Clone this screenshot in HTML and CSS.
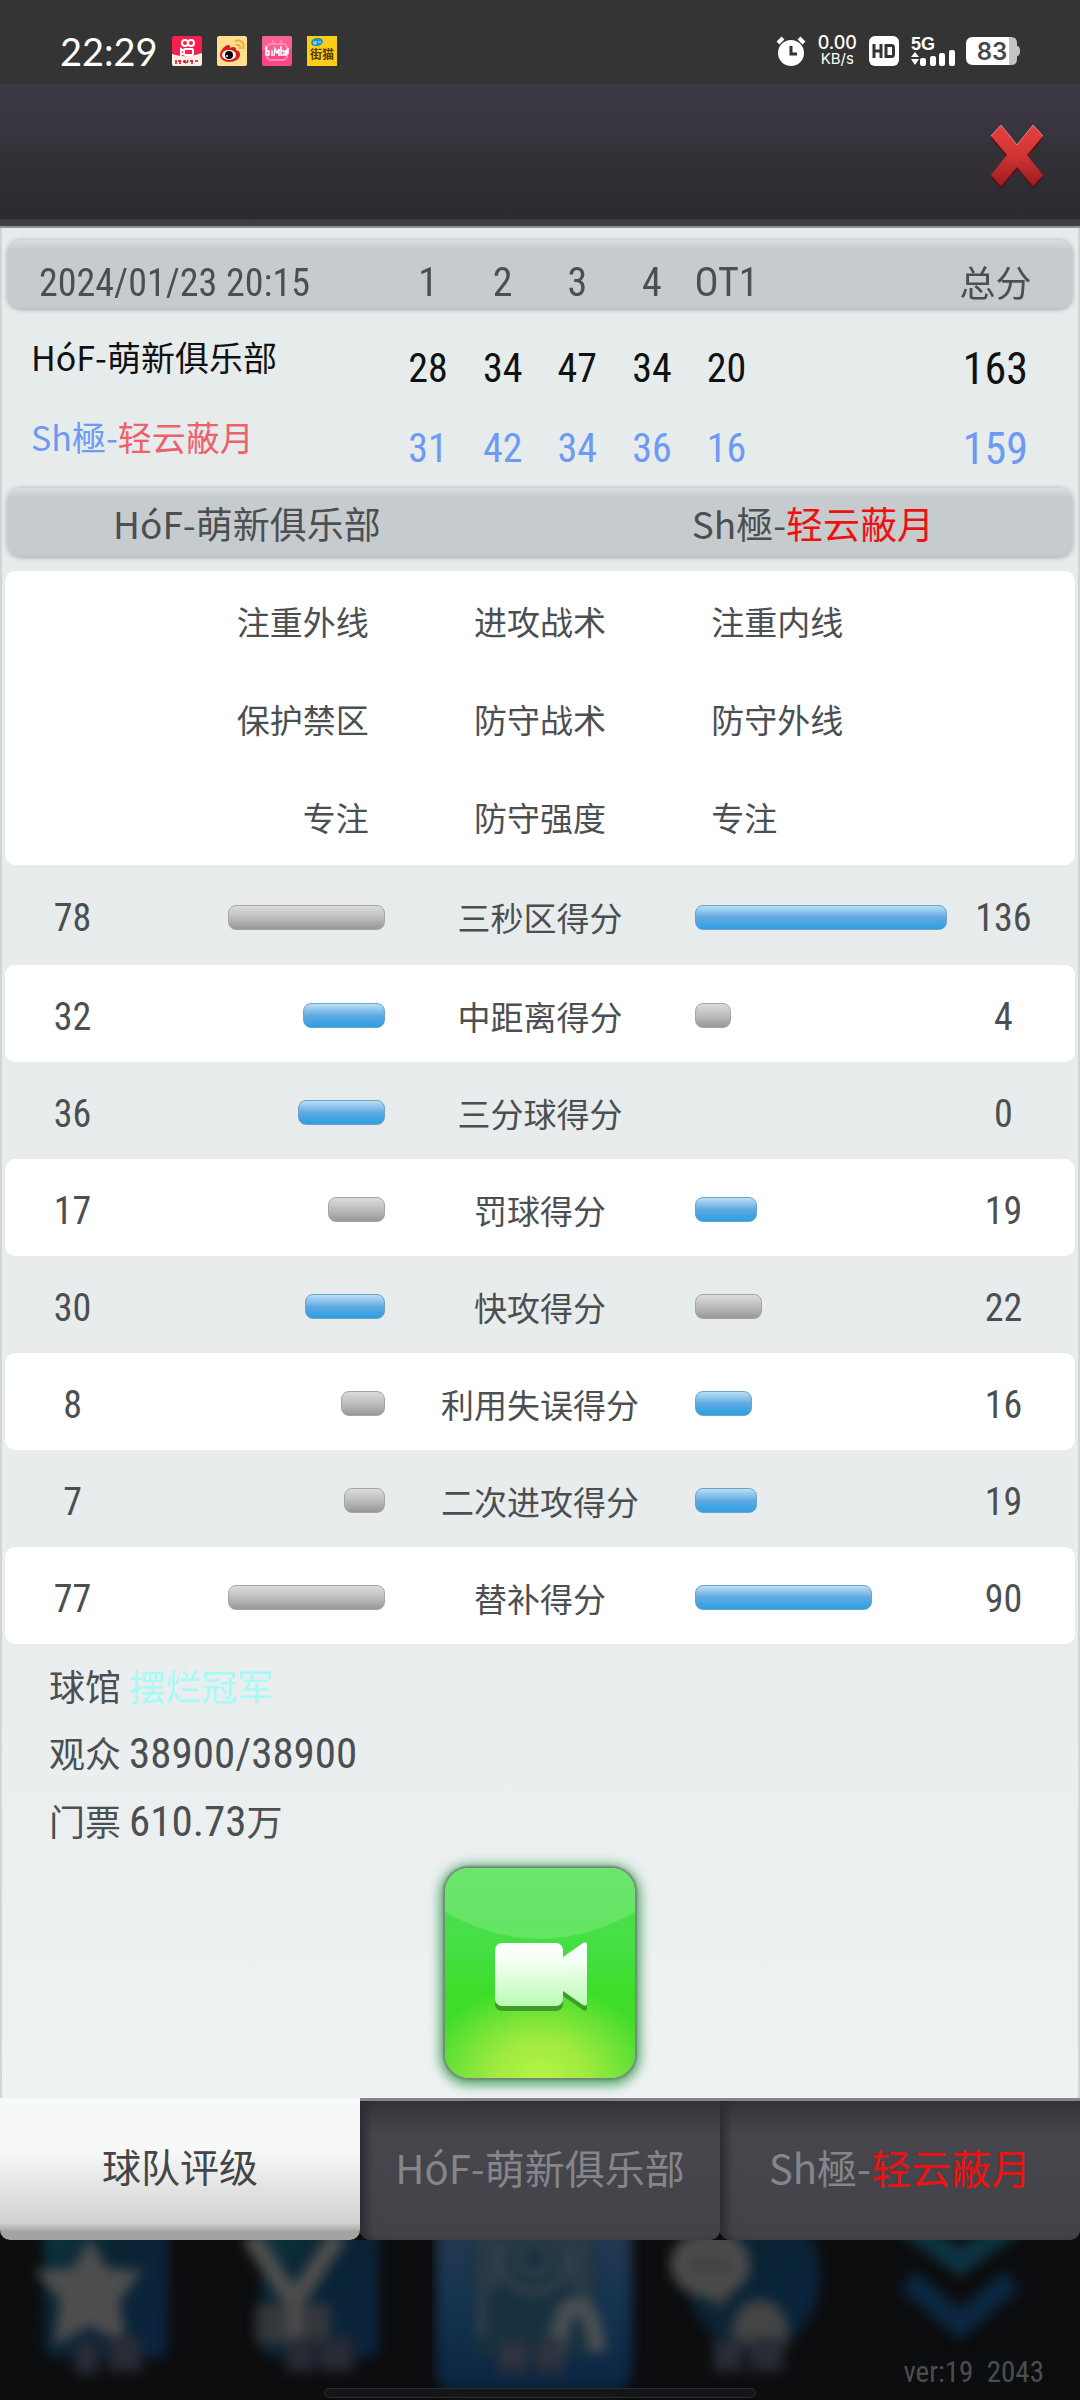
FILE: index.html
```html
<!DOCTYPE html>
<html lang="zh-CN">
<head>
    <meta charset="UTF-8">
    <meta name="viewport" content="width=device-width, initial-scale=1.0">
    <title>比赛数据</title>
    <link rel="stylesheet" href="styles.css">
</head>
<body>
    <div class="status-bar">
        <span class="clock">22:29</span>
        <svg class="app-icon" viewBox="0 0 30 30">
            <rect width="30" height="30" rx="2" fill="#fb1d4e"/>
            <path d="M0 18Q15 23 30 17V28a2 2 0 0 1-2 2H2a2 2 0 0 1-2-2z" fill="#fdeee2"/>
            <g fill="none" stroke="#fff" stroke-width="2">
                <circle cx="13" cy="7" r="3"/>
                <circle cx="19" cy="7" r="3"/>
                <rect x="12" y="13" width="9" height="6" rx="1"/>
                <path d="M12 15l-3-2v6l3-2"/>
            </g>
            <path d="M4 24v4M6 25h3M8 24v4M11 25l3 2M13 24v3M16 24l-1 3M18 25h3M20 24v4M23 25h3" stroke="#d3153b" stroke-width="1.6"/>
        </svg>
        <svg class="app-icon" viewBox="0 0 30 30">
            <rect width="30" height="30" rx="2" fill="#fddf8d"/>
            <path d="M3 19C3 14 9 8 12 9c2 1 1 3 1 3 3-2 7-1 6 2 4 1 4 3 4 5 0 4-5 7-11 7-5 0-9-3-9-7z" fill="#dc1f1c"/>
            <ellipse cx="12" cy="19" rx="7" ry="5" fill="#fff"/>
            <circle cx="12" cy="19" r="4" fill="#000"/>
            <circle cx="10" cy="20" r="1" fill="#fff"/>
            <path d="M18 5c6-2 10 2 8 8M19 9c3-1 5 1 4 4" fill="none" stroke="#f0a93c" stroke-width="2"/>
        </svg>
        <svg class="app-icon" viewBox="0 0 30 30">
            <rect width="30" height="30" rx="2" fill="#fb4584"/>
            <rect width="30" height="14" rx="2" fill="#fc5f96"/>
            <rect x="5" y="8" width="20" height="16" rx="4" fill="none" stroke="#fd8db4" stroke-width="2"/>
            <path d="M10 4l2 3M20 4l-2 3" stroke="#fd8db4" stroke-width="2"/>
            <path d="M4 10v9h3v-4H4M10 14v6M12 20l1-7 2 4 2-4 0 7M19 10v9h3v-4h-3M24 20v-6l2 4v-6" fill="none" stroke="#fff" stroke-width="1.6"/>
        </svg>
        <svg class="app-icon" viewBox="0 0 30 30">
            <rect width="30" height="30" fill="#f9ce16"/>
            <ellipse cx="10" cy="6" rx="6" ry="4" transform="rotate(-12 10 6)" fill="#1593cf"/>
            <path d="M7 5v3h2v-3M11 6h3" fill="none" stroke="#d8f0fb" stroke-width="1"/>
            <text x="15" y="23" text-anchor="middle" class="app-icon-text">街猫</text>
        </svg>
        <span class="spacer"></span>
        <svg class="alarm-icon" viewBox="0 0 30 30">
            <circle cx="15" cy="17" r="13" fill="#fff"/>
            <path d="M2 7l5-5M28 7l-5-5" stroke="#fff" stroke-width="4"/>
            <path d="M15 10v8h6" fill="none" stroke="#343434" stroke-width="3"/>
        </svg>
        <span class="net-speed"><b>0.00</b><small>KB/s</small></span>
        <svg class="hd-icon" viewBox="0 0 30 30">
            <rect width="30" height="30" rx="6" fill="#fff"/>
            <path d="M5 8v14M12 8v14M5 15h7M17 9.500h5.500a2 2 0 0 1 2 2v7a2 2 0 0 1-2 2H17z" fill="none" stroke="#343434" stroke-width="3"/>
        </svg>
        <svg class="signal-icon" viewBox="0 0 44 34">
            <text x="0" y="18" class="signal-text">5G</text>
            <path d="M0 25l4-5 4 5zM0 27l4 6 4-6z" fill="#fff"/>
            <g fill="#fff">
                <rect x="9" y="26" width="6" height="8" rx="2"/>
                <rect x="19" y="24" width="6" height="10" rx="2"/>
                <rect x="28" y="21" width="6" height="13" rx="2"/>
                <rect x="38" y="18" width="6" height="16" rx="2"/>
            </g>
        </svg>
        <svg class="battery-icon" viewBox="0 0 54 28">
            <path d="M43 0h2q6 0 6 6v3q3 0 3 5t-3 5v3q0 6-6 6h-2z" fill="#c4c4c4"/>
            <path d="M7 0h36v28H7q-7 0-7-7V7q0-7 7-7z" fill="#fff"/>
            <text x="26" y="23" text-anchor="middle" class="battery-text">83</text>
        </svg>
    </div>

    <header class="top-bar">
        <button class="close-btn" aria-label="关闭">
            <svg viewBox="0 0 56 66">
                <defs>
                    <linearGradient id="red" x1="0" y1="0" x2="0" y2="1">
                        <stop offset="0" stop-color="#e8403f"/>
                        <stop offset="0.500" stop-color="#cf3433"/>
                        <stop offset="1" stop-color="#9e1c1f"/>
                    </linearGradient>
                </defs>
                <path d="M12 4L28 24 44 4 54 15 38 34 54 54 44 65 28 46 12 65 2 54 18 34 2 15z" fill="#541519"/>
                <path d="M12 1L28 21 44 1 54 12 38 31 54 51 44 62 28 43 12 62 2 51 18 31 2 12z" fill="url(#red)"/>
                <path d="M2 12L12 1 28 21 44 1 54 12" fill="none" stroke="#d98686" stroke-width="1"/>
            </svg>
        </button>
    </header>

    <main class="panel">
        <table class="score">
            <thead>
                <tr>
                    <th class="score-name num">2024/01/23 20:15</th>
                    <th class="num">1</th>
                    <th class="num">2</th>
                    <th class="num">3</th>
                    <th class="num">4</th>
                    <th class="num">OT1</th>
                    <th class="score-total">总分</th>
                </tr>
            </thead>
            <tbody>
                <tr class="home">
                    <td class="score-name">HóF-萌新俱乐部</td>
                    <td class="num">28</td>
                    <td class="num">34</td>
                    <td class="num">47</td>
                    <td class="num">34</td>
                    <td class="num">20</td>
                    <td class="score-total num">163</td>
                </tr>
                <tr class="away">
                    <td class="score-name">Sh極-<span>轻云蔽月</span></td>
                    <td class="num">31</td>
                    <td class="num">42</td>
                    <td class="num">34</td>
                    <td class="num">36</td>
                    <td class="num">16</td>
                    <td class="score-total num">159</td>
                </tr>
            </tbody>
        </table>

        <div class="versus">
            <span>HóF-萌新俱乐部</span>
            <span>Sh極-<em>轻云蔽月</em></span>
        </div>

        <table class="tactics">
            <tr><td>注重外线</td><th>进攻战术</th><td>注重内线</td></tr>
            <tr><td>保护禁区</td><th>防守战术</th><td>防守外线</td></tr>
            <tr><td>专注</td><th>防守强度</th><td>专注</td></tr>
        </table>

        <table class="stats">
            <tr>
                <td class="num">78</td>
                <td><div class="bar" style="width: 61%"></div></td>
                <th>三秒区得分</th>
                <td><div class="bar win" style="width: 98%"></div></td>
                <td class="num">136</td>
            </tr>
            <tr>
                <td class="num">32</td>
                <td><div class="bar win" style="width: 32%"></div></td>
                <th>中距离得分</th>
                <td><div class="bar" style="width: 14%"></div></td>
                <td class="num">4</td>
            </tr>
            <tr>
                <td class="num">36</td>
                <td><div class="bar win" style="width: 34%"></div></td>
                <th>三分球得分</th>
                <td></td>
                <td class="num">0</td>
            </tr>
            <tr>
                <td class="num">17</td>
                <td><div class="bar" style="width: 22%"></div></td>
                <th>罚球得分</th>
                <td><div class="bar win" style="width: 24%"></div></td>
                <td class="num">19</td>
            </tr>
            <tr>
                <td class="num">30</td>
                <td><div class="bar win" style="width: 31%"></div></td>
                <th>快攻得分</th>
                <td><div class="bar" style="width: 26%"></div></td>
                <td class="num">22</td>
            </tr>
            <tr>
                <td class="num">8</td>
                <td><div class="bar" style="width: 17%"></div></td>
                <th>利用失误得分</th>
                <td><div class="bar win" style="width: 22%"></div></td>
                <td class="num">16</td>
            </tr>
            <tr>
                <td class="num">7</td>
                <td><div class="bar" style="width: 16%"></div></td>
                <th>二次进攻得分</th>
                <td><div class="bar win" style="width: 24%"></div></td>
                <td class="num">19</td>
            </tr>
            <tr>
                <td class="num">77</td>
                <td><div class="bar" style="width: 61%"></div></td>
                <th>替补得分</th>
                <td><div class="bar win" style="width: 69%"></div></td>
                <td class="num">90</td>
            </tr>
        </table>

        <div class="info">
            <p>球馆 <span class="arena">摆烂冠军</span></p>
            <p>观众 <span class="num">38900/38900</span></p>
            <p>门票 <span class="num">610.73</span>万</p>
        </div>

        <button class="video-btn" aria-label="录像">
            <svg viewBox="0 0 190 210" preserveAspectRatio="none">
                <defs>
                    <linearGradient id="cam" x1="0" y1="0" x2="0" y2="1">
                        <stop offset="0" stop-color="#ffffff"/>
                        <stop offset="0.300" stop-color="#f4fff3"/>
                        <stop offset="1" stop-color="#b9fbb4"/>
                    </linearGradient>
                </defs>
                <path d="M0 0H190V44Q95 98 0 44z" fill="#fff" fill-opacity="0.160"/>
                <g transform="translate(0 5)" fill="#3f9c29">
                    <rect x="50" y="75" width="68" height="63" rx="7"/>
                    <path d="M118 89L138 75q4-2 4 2v58q0 4-4 2L118 123z"/>
                </g>
                <g fill="url(#cam)">
                    <rect x="50" y="75" width="68" height="63" rx="7"/>
                    <path d="M118 89L138 75q4-2 4 2v58q0 4-4 2L118 123z"/>
                </g>
            </svg>
        </button>
    </main>

    <div class="tabs">
        <button class="tab active">球队评级</button>
        <button class="tab">HóF-萌新俱乐部</button>
        <button class="tab">Sh極-<em>轻云蔽月</em></button>
    </div>

    <nav class="bottom-nav">
        <svg viewBox="0 0 216 160">
            <defs>
                <linearGradient id="tile" x1="0" y1="0" x2="1" y2="1">
                    <stop offset="0" stop-color="#0d3a40"/>
                    <stop offset="0.400" stop-color="#0a2433"/>
                    <stop offset="1" stop-color="#0b2340"/>
                </linearGradient>
            </defs>
            <g class="blur">
                <rect x="44" y="-30" width="124" height="148" rx="12" fill="url(#tile)"/>
                <path d="M90 -2L107 28 142 31 120 60 126 106 90 86 54 106 60 60 34 31 73 28z" fill="#4d4d4d"/>
                <path d="M74 100h26v34H74zM108 96h34v36h-34z" fill="#23262f"/>
                <path d="M78 116h18M86 102v32M112 112h26M118 98v32M132 98v32" stroke="#303440" stroke-width="4"/>
            </g>
        </svg>
        <svg viewBox="0 0 216 160">
            <g class="blur">
                <rect x="46" y="-30" width="116" height="148" rx="12" fill="url(#tile)"/>
                <path d="M40 64h74v40H40z" fill="#33373b"/>
                <path d="M34 -4L78 62 122 -4" fill="none" stroke="#4d4d4d" stroke-width="19"/>
                <path d="M78 56v46" stroke="#4a4a4a" stroke-width="18"/>
                <path d="M70 98h30v34H70zM104 96h34v36h-34z" fill="#23262f"/>
                <path d="M76 102v28M88 102v28M110 100v28M124 100v28M106 114h28" stroke="#303440" stroke-width="4"/>
            </g>
        </svg>
        <svg viewBox="0 0 216 160">
            <defs>
                <linearGradient id="blue" x1="0" y1="0" x2="0" y2="1">
                    <stop offset="0" stop-color="#2a3a52"/>
                    <stop offset="0.500" stop-color="#153450"/>
                    <stop offset="1" stop-color="#0a2440"/>
                </linearGradient>
            </defs>
            <g class="blur">
                <rect x="4" y="-30" width="196" height="182" rx="20" fill="url(#blue)"/>
                <path d="M40 -10H164V70Q164 116 150 116H54Q40 116 40 96z" fill="#17303f"/>
                <path d="M50 -10V96M62 -10V50M154 -10V70M142 -10V50" stroke="#36424c" stroke-width="7"/>
                <circle cx="102" cy="20" r="32" fill="none" stroke="#3a444c" stroke-width="7"/>
                <circle cx="102" cy="18" r="16" fill="none" stroke="#3a444c" stroke-width="6"/>
                <path d="M126 112q2-46 18-46t22 46" fill="none" stroke="#4a4f52" stroke-width="18"/>
                <path d="M66 100h30v34H66zM102 100h30v34h-30z" fill="#232936"/>
                <path d="M74 98v34M88 98v34M68 114h28M112 98v34M126 98v34M104 114h28" stroke="#3a3f4c" stroke-width="4"/>
            </g>
        </svg>
        <svg viewBox="0 0 216 160">
            <g class="blur">
                <ellipse cx="106" cy="36" rx="66" ry="76" fill="url(#tile)"/>
                <path d="M48 46l24 24 14-20z" fill="#3c3c3c"/>
                <ellipse cx="62" cy="24" rx="40" ry="34" fill="#4a4a4a"/>
                <path d="M42 26h42" stroke="#3e3e3e" stroke-width="10"/>
                <path d="M84 106q-2-46 28-46t28 46z" fill="#444"/>
                <path d="M66 98h30v34H66zM102 98h34v34h-34z" fill="#23262f"/>
                <path d="M72 100v30M86 100v30M68 112h28M108 98v34M124 98v34M104 112h32" stroke="#303440" stroke-width="4"/>
            </g>
        </svg>
        <div class="nav-last">
            <svg viewBox="0 0 216 160">
                <g class="blur" fill="none" stroke-width="24">
                    <path d="M44 -16L96 22 148 -16" stroke="#0c3341"/>
                    <path d="M44 40L96 84 148 40" stroke="#0b2740"/>
                </g>
            </svg>
            <span class="version">ver:19&nbsp; 2043</span>
        </div>
        <span class="gesture-bar"></span>
    </nav>
</body>
</html>
```
FILE: styles.css
```css
* {
    box-sizing: border-box;
}
body {
    margin: 0;
    min-height: 100vh;
    display: flex;
    flex-direction: column;
    background-color: #0c0d0f;
    color: #4c4f51;
    font-family: "Noto Sans CJK SC", sans-serif;
    font-size: 33px;
    line-height: 48px;
}
button {
    border: none;
    padding: 0;
    background: none;
    color: inherit;
    font: inherit;
    cursor: pointer;
}
svg {
    display: block;
}
em {
    font-style: normal;
    color: #ee1111;
}
table {
    width: 100%;
    table-layout: fixed;
    border-collapse: separate;
    border-spacing: 0;
}
th,
td {
    padding: 0;
    font-weight: normal;
    text-align: center;
}
.num {
    font-family: "Roboto Condensed", "Noto Sans CJK SC", sans-serif;
    font-size: 40px;
}

/* status bar */
.status-bar {
    display: flex;
    align-items: center;
    height: 84px;
    padding: 18px 60px 0;
    background-color: #343434;
    color: white;
}
.clock {
    margin-right: 14px;
    font-family: Lato, sans-serif;
    font-size: 38px;
}
.app-icon {
    width: 30px;
    height: 30px;
    margin-right: 15px;
}
.app-icon-text {
    font-size: 12px;
    font-weight: bold;
    fill: #5b3a05;
}
.spacer {
    flex: 1;
}
.alarm-icon {
    width: 30px;
    height: 30px;
    margin-right: 12px;
}
.net-speed {
    display: flex;
    flex-direction: column;
    margin-right: 12px;
    font-family: Inter, sans-serif;
    text-align: center;
}
.net-speed b {
    font-size: 18px;
    font-weight: 500;
    line-height: 16px;
}
.net-speed small {
    font-size: 15px;
    line-height: 16px;
}
.hd-icon {
    width: 30px;
    height: 30px;
    margin-right: 12px;
}
.signal-icon {
    width: 44px;
    height: 34px;
    margin: 0 11px 4px 0;
}
.signal-text {
    font-family: "Liberation Sans", sans-serif;
    font-size: 18px;
    font-weight: bold;
    fill: white;
}
.battery-icon {
    width: 54px;
    height: 28px;
}
.battery-text {
    font-family: Inter, sans-serif;
    font-size: 24px;
    font-weight: 600;
    fill: #484848;
}

/* title bar */
.top-bar {
    display: flex;
    justify-content: flex-end;
    align-items: center;
    height: 144px;
    padding: 4px 35px 0 0;
    background: linear-gradient(#3c3944, #36343e 40%, #323136 45%, #2d2b31 95%, #3c3f43 96%);
    border-bottom: 2px solid #8d9193;
}
.close-btn svg {
    width: 56px;
    height: 66px;
}

/* result panel */
.panel {
    display: flex;
    flex-direction: column;
    padding: 12px 3px 20px;
    background: linear-gradient(#e6ebec, #e8ecec 70%, #eef2f3);
    border-left: 2px solid #d0d5d6;
    border-right: 2px solid #d0d5d6;
}
.score,
.versus {
    margin: 0 2px;
}
.score {
    width: auto;
}
.score thead {
    filter: drop-shadow(0 0 2px #aeb4b6);
}
.score thead th {
    height: 70px;
    padding-top: 12px;
    background: linear-gradient(#d9dee0, #c6cbce 14%, #c6cbce 94%, #bdc2c4);
}
.score thead .num {
    padding-top: 16px;
}
.score thead th:first-child {
    border-radius: 14px 0 0 14px;
}
.score thead th:last-child {
    border-radius: 0 14px 14px 0;
}
.score th,
.score td {
    width: 7%;
}
.score .score-name {
    width: 36%;
    padding-left: 24px;
    font-size: 34px;
    text-align: left;
}
.score thead .score-name {
    padding-left: 32px;
    font-size: 38px;
}
.score .score-total {
    width: 29%;
    padding-left: 154px;
    font-size: 36px;
}
.score td.score-total {
    font-size: 44px;
}
.score tbody td {
    height: 82px;
    padding-top: 36px;
    line-height: 40px;
}
.score tbody .score-name {
    padding-top: 12px;
}
.home td {
    color: #111;
}
.away td {
    color: #6d9af2;
}
.away span {
    color: #f0606a;
}
.score tbody .away td {
    height: 78px;
}

.versus {
    display: grid;
    grid-template-columns: 45% 55%;
    height: 70px;
    align-items: center;
    margin-top: 18px;
    border-radius: 14px;
    background: linear-gradient(#d9dee0, #c6cbce 14%, #c6cbce 94%, #bdc2c4);
    box-shadow: 0 0 5px #aeb4b6;
    font-size: 37px;
    text-align: center;
}
.versus span:last-child {
    padding-left: 66px;
}

.tactics {
    margin-top: 13px;
    border-radius: 10px;
    background-color: white;
}
.tactics td,
.tactics th {
    height: 98px;
    width: 34%;
    padding-top: 2px;
}
.tactics th {
    width: 32%;
}
.tactics td:first-child {
    padding-left: 4px;
    text-align: right;
}
.tactics td:last-child {
    text-align: left;
}

.stats td,
.stats th {
    height: 97px;
    padding-top: 4px;
}
.stats tr:first-child > * {
    height: 100px;
}
.stats th,
.stats td:nth-child(3) {
    width: 29%;
}
.stats td:nth-child(2),
.stats td:nth-child(4) {
    width: 24%;
}
.stats .num {
    padding-top: 6px;
    padding-left: 12px;
    font-size: 38px;
}
.stats .num:last-child {
    padding-left: 0;
    padding-right: 20px;
}
.stats tr:nth-child(even) > * {
    background-color: white;
}
.stats tr > :first-child {
    border-radius: 10px 0 0 10px;
}
.stats tr > :last-child {
    border-radius: 0 10px 10px 0;
}
.bar {
    height: 25px;
    border: 1px solid #a5a5a5;
    border-radius: 8px;
    background: linear-gradient(#dcdcdc, #bdbdbd 50%, #989898);
}
.bar.win {
    border-color: #6fa3c4;
    background: linear-gradient(#b9e0f6, #61a9e2 50%, #2aa0e2);
}
.stats td:nth-child(2) .bar {
    margin-left: auto;
}

.info {
    padding: 8px 44px 0;
    font-size: 36px;
}
.info p {
    margin: 0;
    line-height: 67px;
}
.info .num {
    font-size: 43px;
}
.arena {
    color: #a4fbf7;
}

.video-btn {
    align-self: center;
    margin-top: 13px;
    border-radius: 24px;
    overflow: hidden;
    background:
        radial-gradient(ellipse 60% 45% at 50% 100%, #b4f545, #a0ea40 40%, transparent),
        linear-gradient(#4fe052, #44df42 40%, #3cdd28 60%, #4ddd33);
    box-shadow: 0 0 2px 2px #728871, 0 2px 12px 5px #51a86c;
}
.video-btn svg {
    width: 190px;
    height: 210px;
}

/* tabs */
.tabs {
    display: grid;
    grid-template-columns: repeat(3, 1fr);
    position: relative;
    z-index: 1;
}
.tab {
    height: 142px;
    padding-bottom: 8px;
    border-top: 3px solid #848587;
    border-radius: 0 0 10px 10px;
    background: linear-gradient(#343338, #47464c 25%, #434249);
    box-shadow: inset 10px 0 10px -4px #2c2b30;
    color: #85858a;
    font-size: 40px;
    line-height: 56px;
}
.tab.active {
    padding-bottom: 12px;
    border-top-color: #f5f8f8;
    background: linear-gradient(#f7f9f9, #f7f8f8 35%, #cfd0cf 88%, #a2a4a2 94%);
    box-shadow: none;
    color: #434547;
    font-size: 39px;
}

/* dimmed navigation behind the dialog */
.bottom-nav {
    flex: 1;
    display: grid;
    grid-template-columns: repeat(5, 1fr);
    position: relative;
    overflow: hidden;
    background-color: #0c0d0f;
}
.bottom-nav svg {
    width: 100%;
}
.blur {
    filter: blur(6px);
}
.nav-last {
    position: relative;
}
.version {
    position: absolute;
    right: 36px;
    bottom: 4px;
    color: #4c4d4e;
    font-family: "Roboto Condensed", sans-serif;
    font-size: 29px;
    white-space: nowrap;
}
.gesture-bar {
    position: absolute;
    left: 30%;
    right: 30%;
    bottom: 2px;
    height: 10px;
    border: 1px solid #2b2c2e;
    border-radius: 5px;
    background-color: #15161a;
}
```
